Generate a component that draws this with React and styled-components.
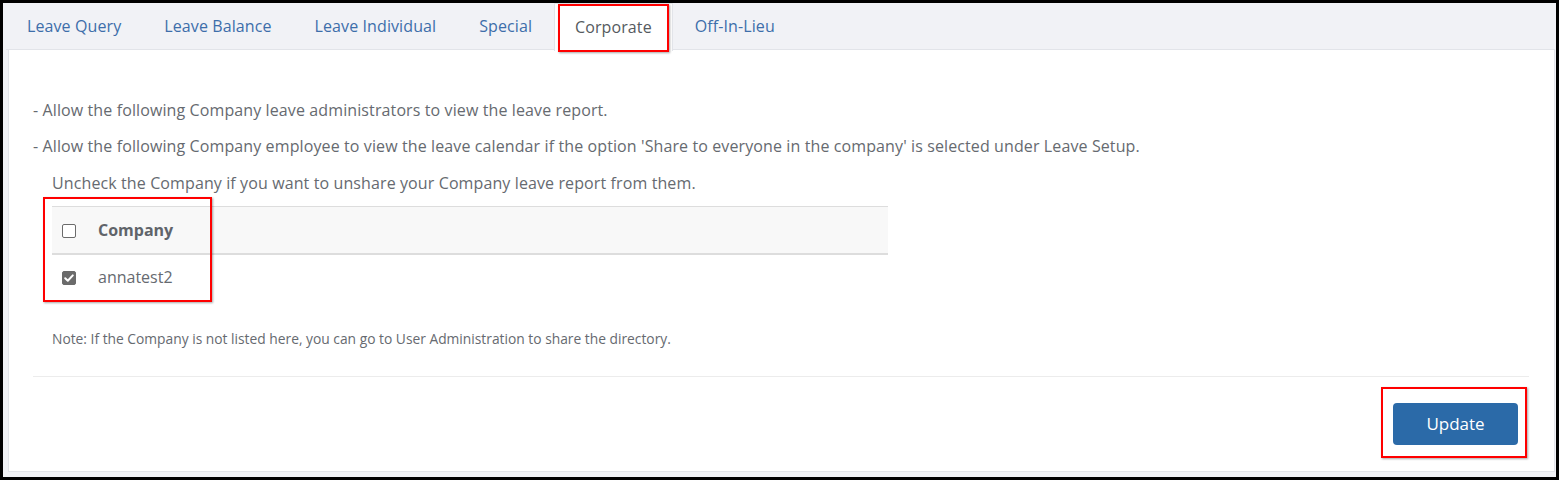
import React from "react";
import styled, { createGlobalStyle } from "styled-components";

const Global = createGlobalStyle`
  html, body { margin: 0; padding: 0; background: #000; }
  body { font-family: "Open Sans", "Noto Sans", sans-serif; }
  * { box-sizing: border-box; }
`;

const Frame = styled.div`
  width: 1559px;
  height: 480px;
  padding: 3px;
  background: #000;
`;

const Screen = styled.div`
  height: 100%;
  background: #f1f2f6;
  display: flex;
  flex-direction: column;
  padding: 0 1px 5px 5px;
`;

const TabBar = styled.div`
  display: flex;
  gap: 1px;
  height: 47px;
  border-bottom: 1px solid #e2e4e9;
  margin-left: -2px;
`;

const Tab = styled.div`
  position: relative;
  display: flex;
  align-items: center;
  padding: 0 20px 2px;
  font-size: 16px;
  letter-spacing: 0.1px;
  color: ${(p) => (p.$active ? "#555a60" : "#3d6eaa")};
  background: ${(p) => (p.$active ? "#fff" : "transparent")};
  border: 1px solid ${(p) => (p.$active ? "#e2e4e9" : "transparent")};
  border-bottom: none;
  margin-bottom: ${(p) => (p.$active ? "-1px" : "0")};
  height: ${(p) => (p.$active ? "48px" : "47px")};
`;

const Highlight = styled.div`
  position: absolute;
  left: ${(p) => p.$l}px;
  top: ${(p) => p.$t}px;
  width: ${(p) => p.$w}px;
  height: ${(p) => p.$h}px;
  border: 2px solid #f00;
  box-shadow: 1px 1px 2px rgba(0, 0, 0, 0.35);
  pointer-events: none;
`;

const Panel = styled.div`
  flex: 1;
  background: #fff;
  border: 1px solid #e2e4e9;
  border-top: none;
  padding: 0 25px 0 24px;
  display: flex;
  flex-direction: column;
`;

const Intro = styled.div`
  padding-top: 42px;
  display: flex;
  flex-direction: column;
`;

const Line = styled.p`
  margin: 0;
  font-size: 16px;
  letter-spacing: 0.11px;
  line-height: 36.3px;
  color: #666a70;
  padding-left: ${(p) => (p.$indent ? "19px" : "0")};
`;

const TableWrap = styled.div`
  position: relative;
  margin-left: 19px;
  margin-top: 5.5px;
  width: 836px;
`;

const Table = styled.table`
  width: 100%;
  border-collapse: collapse;
  font-size: 16px;
  color: #666a70;
`;

const HeadRow = styled.tr`
  background: #f8f8f8;
  border-top: 1px solid #ddd;
  border-bottom: 2px solid #ddd;
  height: 47px;
`;

const Th = styled.th`
  text-align: left;
  font-weight: 700;
  color: #60646a;
  padding: 0;
  width: ${(p) => p.$w || "auto"};
  padding-left: ${(p) => p.$pl || "0"};
`;

const Row = styled.tr`
  height: 45px;
`;

const Td = styled.td`
  padding: 0;
  padding-left: ${(p) => p.$pl || "0"};
  width: ${(p) => p.$w || "auto"};
`;

const Box = styled.span`
  display: inline-block;
  width: 14px;
  height: 14px;
  border-radius: 2px;
  border: 1px solid #6b6b6b;
  background: ${(p) => (p.$checked ? "#6b6b6b" : "#fff")};
  vertical-align: middle;
  position: relative;
  top: -1px;
`;

const Note = styled.p`
  margin: 31px 0 0 19px;
  font-size: 13.8px;
  color: #666a70;
  line-height: 18px;
`;

const Divider = styled.hr`
  border: none;
  border-top: 1px solid #ececec;
  margin: 28px 0 0 0;
`;

const Footer = styled.div`
  display: flex;
  justify-content: flex-end;
  padding-top: 26px;
  padding-right: 11px;
`;

const BtnWrap = styled.div`
  position: relative;
`;

const Button = styled.button`
  width: 125px;
  height: 42px;
  border: none;
  border-radius: 4px;
  background: #2b6aa8;
  color: #fff;
  font-family: "Open Sans", sans-serif;
  font-size: 17px;
`;

const tabs = [
  "Leave Query",
  "Leave Balance",
  "Leave Individual",
  "Special",
  "Corporate",
  "Off-In-Lieu",
];

function Check() {
  return (
    <svg width="14" height="14" viewBox="0 0 14 14" style={{ position: "absolute", left: -1, top: -1 }}>
      <path d="M3.2 7.2 L5.8 9.8 L10.8 4.4" fill="none" stroke="#fff" strokeWidth="2" strokeLinecap="round" strokeLinejoin="round" />
    </svg>
  );
}

export default function App() {
  return (
    <>
      <Global />
      <Frame>
        <Screen>
          <TabBar>
            {tabs.map((t) => (
              <Tab key={t} $active={t === "Corporate"}>
                {t}
                {t === "Corporate" && <Highlight $l={3} $t={0} $w={111} $h={48} />}
              </Tab>
            ))}
          </TabBar>
          <Panel>
            <Intro>
              <Line>- Allow the following Company leave administrators to view the leave report.</Line>
              <Line>
                - Allow the following Company employee to view the leave calendar if the option 'Share to everyone in the company' is selected under Leave Setup.
              </Line>
              <Line $indent>Uncheck the Company if you want to unshare your Company leave report from them.</Line>
            </Intro>
            <TableWrap>
              <Table>
                <thead>
                  <HeadRow>
                    <Th $w="46px" $pl="10px">
                      <Box />
                    </Th>
                    <Th>Company</Th>
                  </HeadRow>
                </thead>
                <tbody>
                  <Row>
                    <Td $w="46px" $pl="10px">
                      <Box $checked>
                        <Check />
                      </Box>
                    </Td>
                    <Td>annatest2</Td>
                  </Row>
                </tbody>
              </Table>
              <Highlight $l={-9} $t={-9} $w={169} $h={105} />
            </TableWrap>
            <Note>Note: If the Company is not listed here, you can go to User Administration to share the directory.</Note>
            <Divider />
            <Footer>
              <BtnWrap>
                <Button>Update</Button>
                <Highlight $l={-12} $t={-16} $w={146} $h={71} />
              </BtnWrap>
            </Footer>
          </Panel>
        </Screen>
      </Frame>
    </>
  );
}
